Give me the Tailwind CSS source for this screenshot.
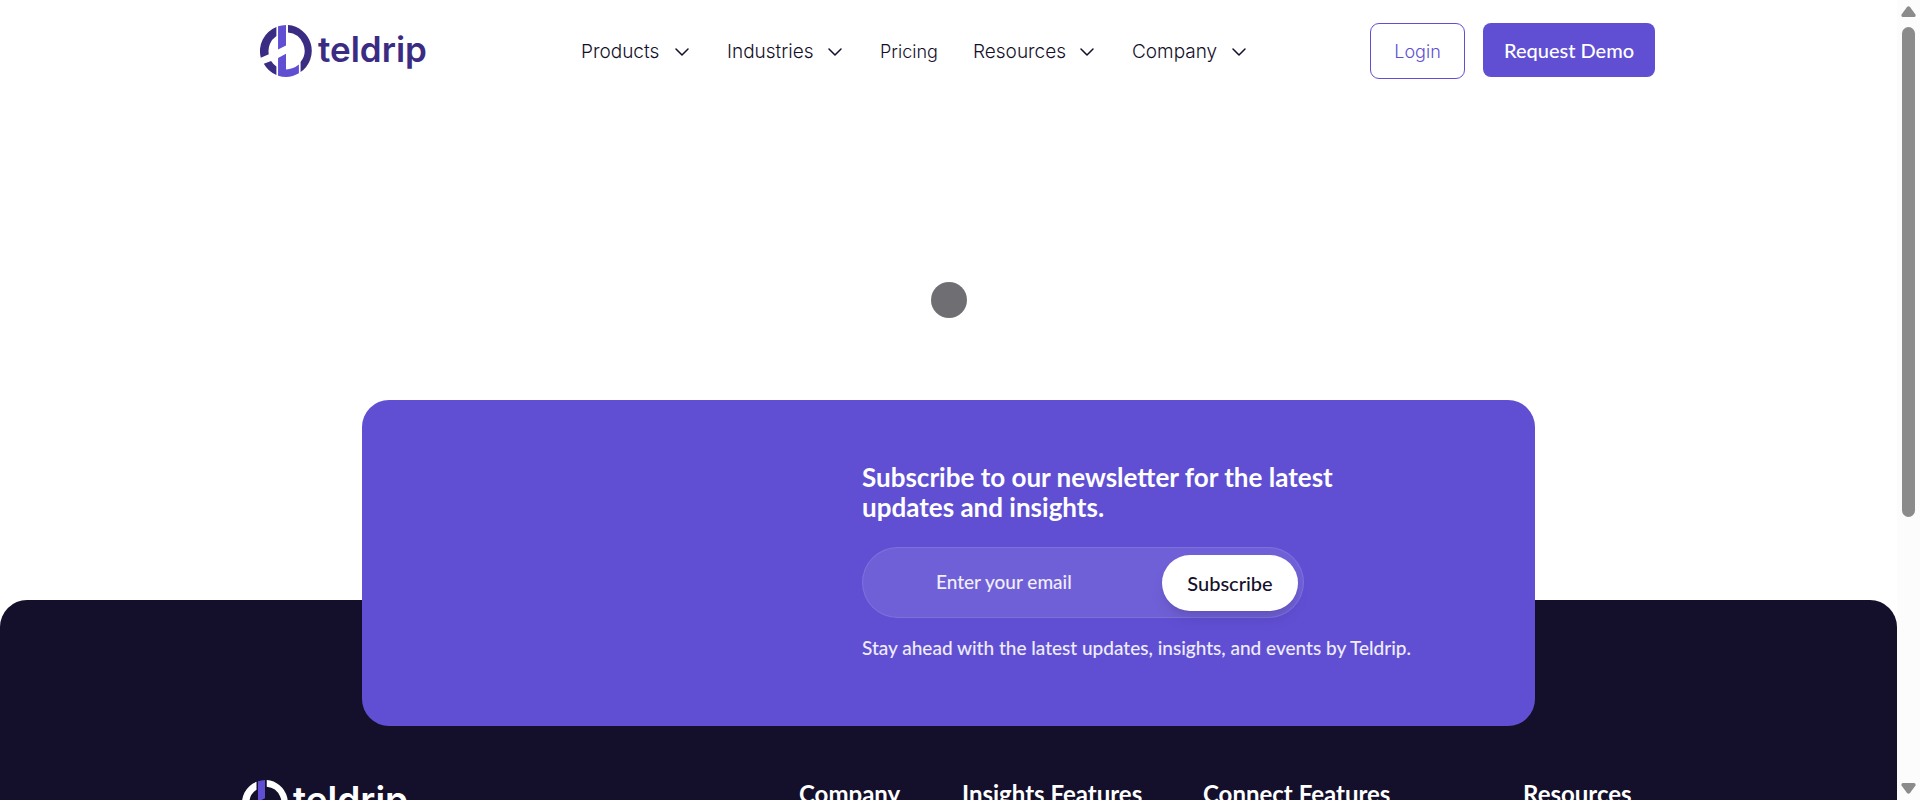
<!DOCTYPE html>
<html lang="en">
<head>
<meta charset="utf-8">
<meta name="viewport" content="width=device-width, initial-scale=1">
<title>Teldrip</title>
<script src="https://cdn.jsdelivr.net/npm/@tailwindcss/browser@4"></script>
</head>
<body class="flex h-screen overflow-hidden bg-white font-['Lato',sans-serif] text-[#140f2b]">
<svg class="hidden" aria-hidden="true">
  <symbol id="mark" viewBox="60 44 156 157">
    <path fill="currentColor" d="M109 50A78 78 0 0 0 62 143L86 132A55 55 0 0 1 109 77ZM71 161L93 153Q99 163 109 169V195A78 78 0 0 1 71 161ZM144 44A78 78 0 0 1 182 186V156A55 55 0 0 0 144 67Z"/>
    <path fill="#604fd3" d="M114 48Q125 45 138 44V106L114 118ZM114 144L138 131V178Q160 177 177 163V190A78 78 0 0 1 114 197Z"/>
  </symbol>
  <symbol id="chevron" viewBox="0 0 14 8">
    <path fill="none" stroke="currentColor" stroke-width="1.5" stroke-linecap="round" stroke-linejoin="round" d="M1 1L7 7L13 1"/>
  </symbol>
</svg>

<div class="min-w-0 flex-1">
  <header class="mx-auto flex h-[102px] w-full max-w-[1413px] items-center pl-[18px]">
    <a href="#" class="flex items-center gap-[6px] text-[#3b2c83]" aria-label="teldrip home">
      <svg class="size-[52px]"><use href="#mark"/></svg>
      <span class="w-[110px] pb-[4px] font-['Inter',sans-serif] text-[35px] leading-[40px] font-semibold">teldrip</span>
    </a>
    <nav class="ml-[153px] flex items-center gap-[38px] pt-[2px] font-['Inter',sans-serif] text-[19px] leading-[24px] font-light whitespace-nowrap">
      <button type="button" class="flex items-center gap-[10px]"><span class="w-[84px] text-left">Products</span><svg class="h-[8px] w-[14px]"><use href="#chevron"/></svg></button>
      <button type="button" class="flex items-center gap-[10px]"><span class="w-[91px] text-left">Industries</span><svg class="h-[8px] w-[14px]"><use href="#chevron"/></svg></button>
      <a href="#" class="w-[55px] text-[18px]">Pricing</a>
      <button type="button" class="flex items-center gap-[10px]"><span class="w-[97px] text-left">Resources</span><svg class="h-[8px] w-[14px]"><use href="#chevron"/></svg></button>
      <button type="button" class="flex items-center gap-[10px]"><span class="w-[90px] text-left">Company</span><svg class="h-[8px] w-[14px]"><use href="#chevron"/></svg></button>
    </nav>
    <div class="ml-auto flex items-start gap-[18px] font-['Inter',sans-serif] text-[18px] leading-[24px]">
      <button type="button" class="h-[56px] w-[95px] rounded-[9px] border border-[#604fd3] pt-[2px] font-light text-[#604fd3]">Login</button>
      <button type="button" class="h-[54px] w-[172px] rounded-[8px] bg-[#604fd3] font-['Lato',sans-serif] text-[20px] font-medium text-white">Request Demo</button>
    </div>
  </header>

  <main>
    <div class="flex justify-center pt-[180px] pb-[82px]" role="status" aria-label="Loading">
      <div class="size-[36px] rounded-full bg-[#6f6e73]"></div>
    </div>
    <section class="relative z-10 mx-auto -mb-[126px] w-full max-w-[1173px] rounded-[27px] bg-[#604fd3] pt-[62px] pr-[100px] pb-[66px] pl-[500px] text-white">
      <h2 class="text-[26px] leading-[30px] font-bold">Subscribe to our newsletter for the latest<br>updates and insights.</h2>
      <form class="mt-[25px] flex h-[71px] w-[442px] max-w-full items-center rounded-full border border-white/10 bg-white/10 pr-[5px] pl-[73px]">
        <label for="email" class="sr-only">Email</label>
        <input id="email" type="email" placeholder="Enter your email" class="min-w-0 flex-1 bg-transparent pb-[2px] text-[19px] leading-[24px] font-medium outline-none placeholder:text-white/90">
        <button type="button" class="h-[56px] w-[136px] rounded-full bg-white text-[20px] font-medium text-[#140f2b] shadow-lg">Subscribe</button>
      </form>
      <p class="mt-[18px] text-[19px] leading-[24px] font-medium whitespace-nowrap text-white/90">Stay ahead with the latest updates, insights, and events by Teldrip.</p>
    </section>
  </main>

  <footer class="rounded-t-[27px] bg-[#140f2b] pt-[180px] pb-[64px] text-white">
    <div class="mx-auto grid w-full max-w-[1413px] grid-cols-[557fr_163fr_241fr_320fr_132fr] items-start whitespace-nowrap">
      <a href="#" class="flex items-start gap-[5px]" aria-label="teldrip home">
        <svg class="size-[46px]"><use href="#mark"/></svg>
        <span class="font-['Inter',sans-serif] text-[37px] leading-[40px] font-semibold">teldrip</span>
      </a>
      <h3 class="text-[24px] leading-[28px] font-bold">Company</h3>
      <h3 class="text-[24px] leading-[28px] font-bold">Insights Features</h3>
      <h3 class="text-[24px] leading-[28px] font-bold">Connect Features</h3>
      <h3 class="text-[24px] leading-[28px] font-bold">Resources</h3>
    </div>
  </footer>
</div>

<div class="flex h-full w-[23px] shrink-0 flex-col items-center bg-[#fcfcfc] py-[6px] text-[#8b8b8b]" aria-hidden="true">
  <svg class="h-[11px] w-[15px]" viewBox="0 0 15 11"><path fill="currentColor" d="M6 1Q7.500 -.5 9 1L14.500 8.500Q15 11 13 11H2Q0 11 .5 8.500Z"/></svg>
  <div class="mt-[10px] h-[490px] w-[13px] rounded-full bg-current"></div>
  <svg class="mt-auto h-[11px] w-[15px]" viewBox="0 0 15 11"><path fill="currentColor" d="M6 10Q7.500 11.500 9 10L14.500 2.500Q15 0 13 0H2Q0 0 .5 2.500Z"/></svg>
</div>
</body>
</html>
